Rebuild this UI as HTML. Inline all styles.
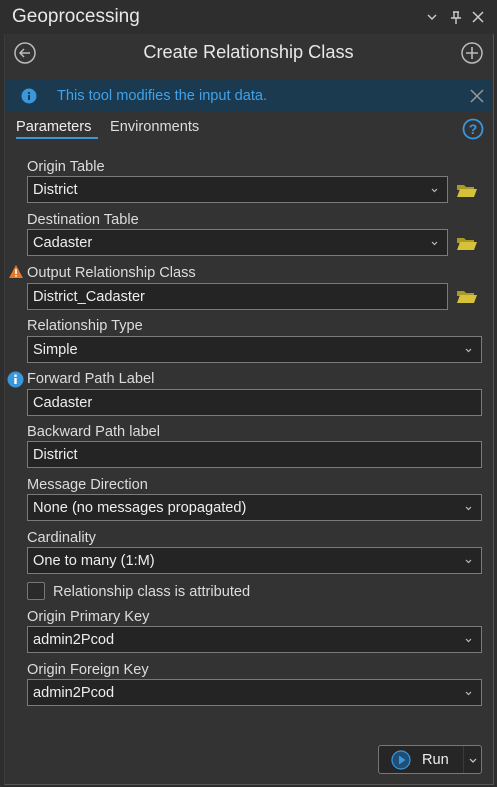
<!DOCTYPE html>
<html><head><style>
body{margin:0;width:497px;height:787px;background:#2e2e2e;font-family:"Liberation Sans",sans-serif;color:#e6e6e6;position:relative;overflow:hidden}
.a{position:absolute}
.panel{left:4px;top:34px;width:488px;height:750px;background:#333;border-left:1px solid #3c3c3c;border-right:1px solid #555;border-bottom:1px solid #555}
.lbl{font-size:14.6px;color:#dcdcdc;left:27px}
.box{left:27px;background:#242424;border:1px solid #7a7a7a;font-size:14.6px;line-height:27px;padding-left:5px;box-sizing:border-box;height:27px;color:#eee}
.w1{width:421px}.w2{width:455px}
.chev{position:absolute;right:9px;top:11px;width:7px;height:5px}
</style></head><body>
<div class="a" style="left:12px;top:6px;font-size:19px;color:#e8e8e8">Geoprocessing</div>
<svg class="a" style="left:425px;top:10px" width="64" height="16"><path d="M3 5l4 4 4-4" stroke="#ccc" stroke-width="1.4" fill="none"/><path d="M28 2h6M29 2v6M33 2v6M26 8h10M31 8v6" stroke="#ccc" stroke-width="1.4" fill="none"/><path d="M48 2l10 10M58 2l-10 10" stroke="#ccc" stroke-width="1.5"/></svg>
<div class="a panel"></div>
<svg class="a" style="left:13px;top:41px" width="24" height="24"><circle cx="12" cy="12" r="10" stroke="#bbb" stroke-width="1.5" fill="none"/><path d="M17 12H7M11 8l-4 4 4 4" stroke="#bbb" stroke-width="1.5" fill="none"/></svg>
<div class="a" style="left:0;width:497px;top:42px;text-align:center;font-size:18.2px;color:#e8e8e8">Create Relationship Class</div>
<svg class="a" style="left:460px;top:41px" width="24" height="24"><circle cx="12" cy="12" r="10" stroke="#bbb" stroke-width="1.5" fill="none"/><path d="M12 6v12M6 12h12" stroke="#bbb" stroke-width="1.6"/></svg>
<div class="a" style="left:5px;top:80px;width:486px;height:31px;background:#1b3a4f"></div>
<svg class="a" style="left:21px;top:88px" width="16" height="16"><circle cx="8" cy="8" r="7.5" fill="#3a97dc"/><rect x="7" y="7" width="2" height="5" fill="#1b3a4f"/><rect x="7" y="4" width="2" height="2" fill="#1b3a4f"/></svg>
<div class="a" style="left:57px;top:88px;font-size:14.6px;color:#3ea2ec">This tool modifies the input data.</div>
<svg class="a" style="left:470px;top:89px" width="14" height="14"><path d="M1 1l12 12M13 1L1 13" stroke="#999" stroke-width="1.5"/></svg>
<div class="a" style="left:16px;top:119px;font-size:14.6px;color:#eee">Parameters</div>
<div class="a" style="left:16px;top:137px;width:82px;height:2px;background:#3a97dc"></div>
<div class="a" style="left:110px;top:119px;font-size:14.6px;color:#ddd">Environments</div>
<svg class="a" style="left:462px;top:118px" width="22" height="22"><circle cx="11" cy="11" r="9.5" stroke="#3a97dc" stroke-width="1.8" fill="none"/><text x="11" y="16" text-anchor="middle" font-size="14" font-family="Liberation Sans" fill="#3a97dc" font-weight="bold">?</text></svg>

<div class="a lbl" style="top:159px">Origin Table</div>
<div class="a box w1" style="top:176px">District<svg class="chev"><path d="M1 1l2.5 2.5L6 1" stroke="#bbb" stroke-width="1.2" fill="none"/></svg></div>
<div class="a lbl" style="top:212px">Destination Table</div>
<div class="a box w1" style="top:229px">Cadaster<svg class="chev"><path d="M1 1l2.5 2.5L6 1" stroke="#bbb" stroke-width="1.2" fill="none"/></svg></div>
<svg class="a" style="left:8px;top:264px" width="16" height="15"><path d="M8 1L15 14H1Z" fill="#e07a2e"/><rect x="7.2" y="5" width="1.6" height="5" fill="#fff"/><rect x="7.2" y="11" width="1.6" height="1.6" fill="#fff"/></svg>
<div class="a lbl" style="top:265px">Output Relationship Class</div>
<div class="a box w1" style="top:283px">District_Cadaster</div>
<div class="a lbl" style="top:318px">Relationship Type</div>
<div class="a box w2" style="top:336px">Simple<svg class="chev"><path d="M1 1l2.5 2.5L6 1" stroke="#bbb" stroke-width="1.2" fill="none"/></svg></div>
<svg class="a" style="left:7px;top:371px" width="17" height="17"><circle cx="8.5" cy="8.5" r="8" fill="#3a97dc"/><rect x="7.3" y="7" width="2.4" height="6" fill="#fff"/><rect x="7.3" y="3.5" width="2.4" height="2.4" fill="#fff"/></svg>
<div class="a lbl" style="top:371px">Forward Path Label</div>
<div class="a box w2" style="top:389px">Cadaster</div>
<div class="a lbl" style="top:424px">Backward Path label</div>
<div class="a box w2" style="top:441px">District</div>
<div class="a lbl" style="top:477px">Message Direction</div>
<div class="a box w2" style="top:494px">None (no messages propagated)<svg class="chev"><path d="M1 1l2.5 2.5L6 1" stroke="#bbb" stroke-width="1.2" fill="none"/></svg></div>
<div class="a lbl" style="top:530px">Cardinality</div>
<div class="a box w2" style="top:547px">One to many (1:M)<svg class="chev"><path d="M1 1l2.5 2.5L6 1" stroke="#bbb" stroke-width="1.2" fill="none"/></svg></div>
<div class="a" style="left:27px;top:582px;width:16px;height:16px;border:1px solid #777;border-radius:2px;background:#2a2a2a"></div>
<div class="a" style="left:53px;top:584px;font-size:14.6px;color:#ddd">Relationship class is attributed</div>
<div class="a lbl" style="top:609px">Origin Primary Key</div>
<div class="a box w2" style="top:626px">admin2Pcod<svg class="chev"><path d="M1 1l2.5 2.5L6 1" stroke="#bbb" stroke-width="1.2" fill="none"/></svg></div>
<div class="a lbl" style="top:662px">Origin Foreign Key</div>
<div class="a box w2" style="top:679px">admin2Pcod<svg class="chev"><path d="M1 1l2.5 2.5L6 1" stroke="#bbb" stroke-width="1.2" fill="none"/></svg></div>

<svg class="a" style="left:456px;top:182px" width="22" height="16"><path d="M1 3h7l2 2h8v3H1Z" fill="#a89a25"/><path d="M1 15L4 7h17l-3 8Z" fill="#d6c239"/></svg>
<svg class="a" style="left:456px;top:235px" width="22" height="16"><path d="M1 3h7l2 2h8v3H1Z" fill="#a89a25"/><path d="M1 15L4 7h17l-3 8Z" fill="#d6c239"/></svg>
<svg class="a" style="left:456px;top:288px" width="22" height="16"><path d="M1 3h7l2 2h8v3H1Z" fill="#a89a25"/><path d="M1 15L4 7h17l-3 8Z" fill="#d6c239"/></svg>

<div class="a" style="left:378px;top:745px;width:104px;height:29px;border:1px solid #777;border-radius:3px;background:#262626;box-sizing:border-box"></div>
<div class="a" style="left:463px;top:746px;width:1px;height:27px;background:#3a3a3a"></div>
<svg class="a" style="left:391px;top:750px" width="20" height="20"><circle cx="10" cy="10" r="9" fill="#1d4f78" stroke="#3a97dc" stroke-width="1.2"/><path d="M8 5.5v9l6.5-4.5Z" fill="#3a97dc"/></svg>
<div class="a" style="left:422px;top:752px;font-size:14.6px;color:#eee">Run</div>
<svg class="a" style="left:469px;top:758px" width="8" height="5"><path d="M1 1l3 3 3-3" stroke="#ccc" stroke-width="1.2" fill="none"/></svg>
</body></html>
